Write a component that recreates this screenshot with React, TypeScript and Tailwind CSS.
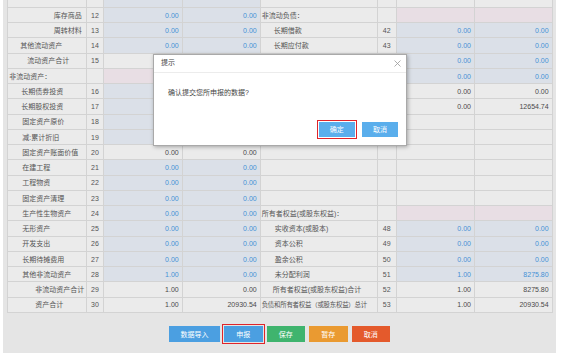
import React from "react";

type Kind = "blue" | "gray" | "pink";
type Side = { label?: string; pad?: string; no?: string; a?: string; b?: string; kind: Kind };

const EMPTY: Side = { kind: "gray" };

// rows whose left values / right labels sit under the confirm dialog carry no text there
const ROWS: [Side, Side][] = [
  [
    { label: "库存商品", pad: "text-right pr-[4px]", no: "12", a: "0.00", b: "0.00", kind: "blue" },
    { label: "非流动负债：", pad: "pl-[1px]", kind: "pink" },
  ],
  [
    { label: "周转材料", pad: "text-right pr-[4px]", no: "13", a: "0.00", b: "0.00", kind: "blue" },
    { label: "长期借款", pad: "pl-[13px]", no: "42", a: "0.00", b: "0.00", kind: "blue" },
  ],
  [
    { label: "其他流动资产", pad: "pl-[12px]", no: "14", a: "0.00", b: "0.00", kind: "blue" },
    { label: "长期应付款", pad: "pl-[13px]", no: "43", a: "0.00", b: "0.00", kind: "blue" },
  ],
  [
    { label: "流动资产合计", pad: "pl-[19px]", no: "15", kind: "gray" },
    { a: "0.00", b: "0.00", kind: "blue" },
  ],
  [
    { label: "非流动资产：", pad: "pl-[1px]", kind: "pink" },
    { a: "0.00", b: "0.00", kind: "blue" },
  ],
  [
    { label: "长期债券投资", pad: "pl-[13px]", no: "16", kind: "blue" },
    { a: "0.00", b: "0.00", kind: "gray" },
  ],
  [
    { label: "长期股权投资", pad: "pl-[13px]", no: "17", kind: "blue" },
    { a: "0.00", b: "12654.74", kind: "gray" },
  ],
  [{ label: "固定资产原价", pad: "pl-[14px]", no: "18", kind: "blue" }, EMPTY],
  [{ label: "减:累计折旧", pad: "pl-[14px]", no: "19", kind: "blue" }, EMPTY],
  [{ label: "固定资产账面价值", pad: "pl-[14px]", no: "20", a: "0.00", b: "0.00", kind: "gray" }, EMPTY],
  [{ label: "在建工程", pad: "pl-[14px]", no: "21", a: "0.00", b: "0.00", kind: "blue" }, EMPTY],
  [{ label: "工程物资", pad: "pl-[14px]", no: "22", a: "0.00", b: "0.00", kind: "blue" }, EMPTY],
  [{ label: "固定资产清理", pad: "pl-[14px]", no: "23", a: "0.00", b: "0.00", kind: "blue" }, EMPTY],
  [
    { label: "生产性生物资产", pad: "pl-[14px]", no: "24", a: "0.00", b: "0.00", kind: "blue" },
    { label: "所有者权益(或股东权益)：", pad: "pl-[1px]", kind: "pink" },
  ],
  [
    { label: "无形资产", pad: "pl-[14px]", no: "25", a: "0.00", b: "0.00", kind: "blue" },
    { label: "实收资本(或股本)", pad: "pl-[14px]", no: "48", a: "0.00", b: "0.00", kind: "blue" },
  ],
  [
    { label: "开发支出", pad: "pl-[14px]", no: "26", a: "0.00", b: "0.00", kind: "blue" },
    { label: "资本公积", pad: "pl-[14px]", no: "49", a: "0.00", b: "0.00", kind: "blue" },
  ],
  [
    { label: "长期待摊费用", pad: "pl-[14px]", no: "27", a: "0.00", b: "0.00", kind: "blue" },
    { label: "盈余公积", pad: "pl-[14px]", no: "50", a: "0.00", b: "0.00", kind: "blue" },
  ],
  [
    { label: "其他非流动资产", pad: "pl-[14px]", no: "28", a: "1.00", b: "0.00", kind: "blue" },
    { label: "未分配利润", pad: "pl-[14px]", no: "51", a: "1.00", b: "8275.80", kind: "blue" },
  ],
  [
    { label: "非流动资产合计", pad: "pl-[27px]", no: "29", a: "1.00", b: "0.00", kind: "gray" },
    { label: "所有者权益(或股东权益)合计", pad: "pl-[12px]", no: "52", a: "1.00", b: "8275.80", kind: "gray" },
  ],
  [
    { label: "资产合计", pad: "pl-[27px]", no: "30", a: "1.00", b: "20930.54", kind: "gray" },
    {
      label: "负债和所有者权益（或股东权益）总计",
      pad: "pl-[1px] text-[6.4px] tracking-[-0.2px]",
      no: "53",
      a: "1.00",
      b: "20930.54",
      kind: "gray",
    },
  ],
];

const cell = "p-0 border border-[#d3d3d3] whitespace-nowrap overflow-hidden";

function valueCls(kind: Kind) {
  if (kind === "blue") return "bg-[#dbe0e8] text-[#4591d6]";
  if (kind === "pink") return "bg-[#e8dee4]";
  return "bg-[#ebebeb] text-[#4a4a4a]";
}

function Half({ s }: { s: Side }) {
  return (
    <>
      <td className={`${cell} bg-[#ebebeb] text-[#555] ${s.pad ?? ""}`}>{s.label}</td>
      <td className={`${cell} bg-[#ebebeb] text-center text-[#555]`}>{s.kind === "pink" ? "" : s.no}</td>
      <td className={`${cell} text-right pr-[3px] ${valueCls(s.kind)}`}>{s.a}</td>
      <td className={`${cell} text-right pr-[3px] ${valueCls(s.kind)}`}>{s.b}</td>
    </>
  );
}

function Btn({ label, color, wide, marked }: { label: string; color: string; wide?: boolean; marked?: boolean }) {
  return (
    <button
      className={`h-[16.6px] ${wide ? "w-[51px]" : "w-[38.5px]"} ${color} text-white text-[7px] leading-none ${
        marked ? "outline-solid outline-[1.5px] outline-[#e0242a] outline-offset-[1px]" : ""
      }`}
    >
      {label}
    </button>
  );
}

export default function App() {
  return (
    <div className="relative w-[561px] h-[353px] bg-white overflow-hidden font-['Liberation_Sans','Noto_Sans_CJK_SC',sans-serif] text-[7px]">
      <div className="ml-[3px] w-[553px] h-full bg-[#e5e5e5] pl-[4.3px]">
        <table className="table-fixed border-collapse w-[544.4px] leading-none">
          <colgroup>
            <col className="w-[78.4px]" />
            <col className="w-[17.6px]" />
            <col className="w-[78.4px]" />
            <col className="w-[78px]" />
            <col className="w-[117px]" />
            <col className="w-[19px]" />
            <col className="w-[78.3px]" />
            <col className="w-[77.7px]" />
          </colgroup>
          <tbody>
            <tr className="h-[7.4px]">
              <td className={`${cell} bg-[#ebebeb] border-t-0`} />
              <td className={`${cell} bg-[#ebebeb] border-t-0`} />
              <td className={`${cell} bg-[#dbe0e8] border-t-0`} />
              <td className={`${cell} bg-[#dbe0e8] border-t-0`} />
              <td className={`${cell} bg-[#ebebeb] border-t-0`} />
              <td className={`${cell} bg-[#ebebeb] border-t-0`} />
              <td className={`${cell} bg-[#ebebeb] border-t-0`} />
              <td className={`${cell} bg-[#ebebeb] border-t-0`} />
            </tr>
            {ROWS.map(([l, r], i) => (
              <tr key={i} className="h-[15.26px]">
                <Half s={l} />
                <Half s={r} />
              </tr>
            ))}
          </tbody>
        </table>

        <div className="mt-[13px] flex justify-center gap-[4px] pr-[4.3px]">
          <Btn label="数据导入" color="bg-[#4b9fe1]" wide />
          <Btn label="申报" color="bg-[#4b9fe1]" marked />
          <Btn label="保存" color="bg-[#3fb46e]" />
          <Btn label="暂存" color="bg-[#ea9a31]" />
          <Btn label="取消" color="bg-[#e45a2c]" />
        </div>
      </div>

      {/* confirm dialog */}
      <div className="absolute left-[153px] top-[54px] w-[254px] h-[92px] bg-white border border-[#a9a9a9] shadow-[1px_1px_4px_rgba(0,0,0,0.3)] flex flex-col text-[#444]">
        <div className="h-[17.7px] flex items-center justify-between pl-[7px] pr-[5px] border-b border-[#ececec]">
          <span>提示</span>
          <svg width="7" height="7" viewBox="0 0 7 7" className="text-[#999]">
            <path d="M0.5 0.5L6.5 6.5M6.5 0.5L0.5 6.5" stroke="currentColor" strokeWidth="0.8" />
          </svg>
        </div>
        <div className="pl-[14px] mt-[15px]">确认提交您所申报的数据?</div>
        <div className="mt-auto mb-[8.5px] flex justify-end gap-[7.3px] pr-[8px]">
          <button className="w-[35.7px] h-[15px] bg-[#5aaeec] text-white text-[7px] leading-none outline-solid outline-[1.5px] outline-[#e0242a] outline-offset-[1px]">
            确定
          </button>
          <button className="w-[36px] h-[15px] bg-[#5aaeec] text-white text-[7px] leading-none">取消</button>
        </div>
      </div>
    </div>
  );
}
